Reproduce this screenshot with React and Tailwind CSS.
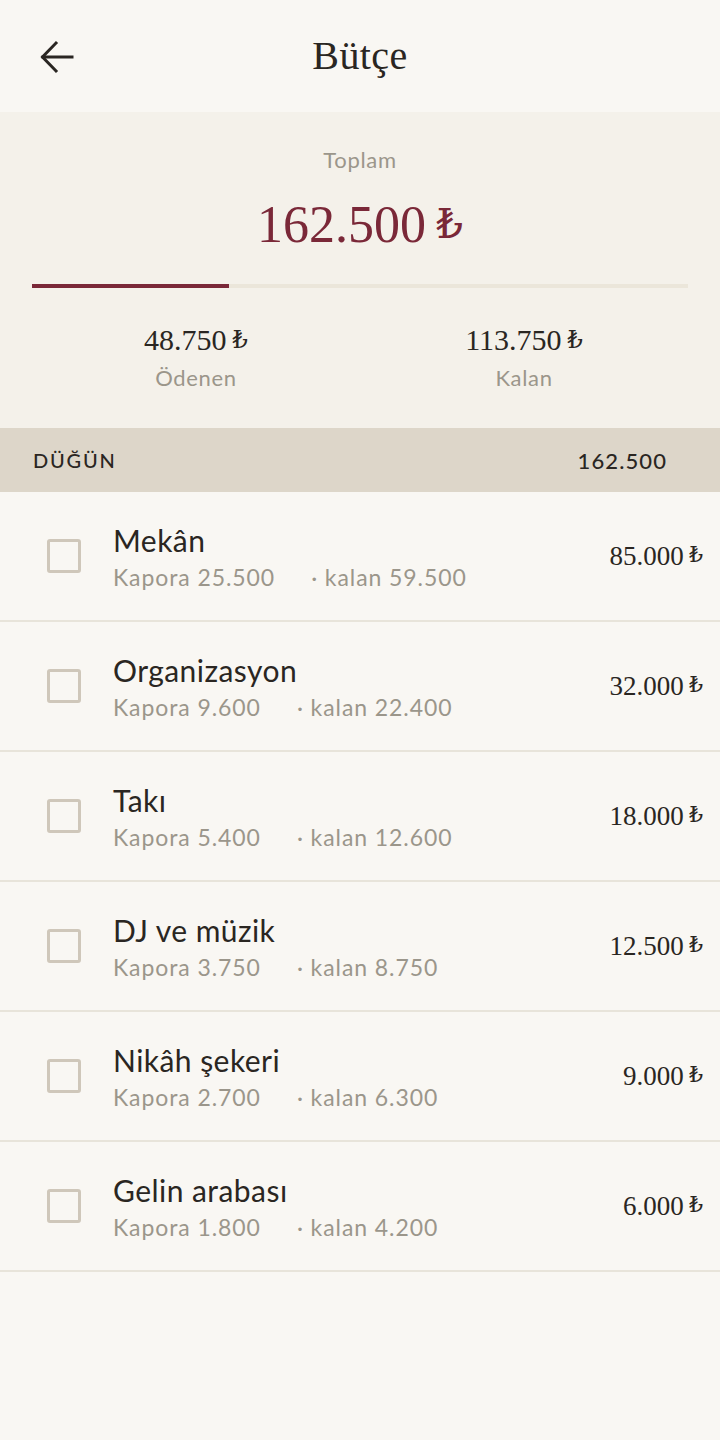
import React from "react";

const SERIF = { fontFamily: '"Liberation Serif", "DejaVu Serif", serif' };
const SANS = { fontFamily: 'Lato, "Open Sans", sans-serif' };

const items = [
  { name: "Mekân", kapora: "25.500", kalan: "59.500", amount: "85.000" },
  { name: "Organizasyon", kapora: "9.600", kalan: "22.400", amount: "32.000" },
  { name: "Takı", kapora: "5.400", kalan: "12.600", amount: "18.000" },
  { name: "DJ ve müzik", kapora: "3.750", kalan: "8.750", amount: "12.500" },
  { name: "Nikâh şekeri", kapora: "2.700", kalan: "6.300", amount: "9.000" },
  { name: "Gelin arabası", kapora: "1.800", kalan: "4.200", amount: "6.000" },
];

function Lira() {
  return <span className="ml-[0.25em] text-[0.8em] font-normal leading-none">₺</span>;
}

export default function App() {
  return (
    <div className="min-h-[1440px] w-[720px] bg-[#f9f7f3] text-[#2a2622]" style={SANS}>
      {/* Header */}
      <div className="grid h-[112px] grid-cols-[1fr_auto_1fr] items-center px-[36px]">
        <div className="flex items-center">
          <svg width="40" height="40" viewBox="0 0 40 40" fill="none" stroke="#2a2622" strokeWidth="3" className="ml-[1px] mt-[1px]">
            <path d="M6 20H35" strokeLinecap="square" />
            <path d="M19 6L5.5 20L19 34" strokeLinecap="square" strokeLinejoin="miter" />
          </svg>
        </div>
        <div className="text-[40px] leading-none tracking-[0.01em] text-[#2a2622]" style={SERIF}>
          Bütçe
        </div>
        <div />
      </div>

      {/* Summary */}
      <div className="flex h-[316px] flex-col bg-[#f4f1ea] px-[32px] pt-[36px]">
        <div className="h-[24px] text-center text-[22px] leading-[24px] tracking-[0.03em] text-[#9b968b]">Toplam</div>
        <div className="mt-[25px] flex h-[56px] items-center justify-center overflow-visible text-[52px] leading-none text-[#7a2838]" style={SERIF}>
          <span>162.500</span>
          <Lira />
        </div>
        <div className="mt-[31px] h-[4px] w-full shrink-0 bg-[#ebe6da]">
          <div className="h-full w-[30%] bg-[#7a2838]" />
        </div>
        <div className="mt-[34px] grid grid-cols-2">
          <div className="flex flex-col items-center">
            <div className="flex h-[36px] items-center text-[30px] leading-none text-[#2a2622]" style={SERIF}>
              <span>48.750</span>
              <Lira />
            </div>
            <div className="mt-[8px] h-[24px] text-[22px] leading-[24px] tracking-[0.03em] text-[#9b968b]">Ödenen</div>
          </div>
          <div className="flex flex-col items-center">
            <div className="flex h-[36px] items-center text-[30px] leading-none text-[#2a2622]" style={SERIF}>
              <span>113.750</span>
              <Lira />
            </div>
            <div className="mt-[8px] h-[24px] text-[22px] leading-[24px] tracking-[0.03em] text-[#9b968b]">Kalan</div>
          </div>
        </div>
      </div>

      {/* Section header */}
      <div className="flex h-[64px] items-center justify-between bg-[#ddd6c9] pl-[33px] pr-[53px]">
        <div className="text-[20px] font-medium tracking-[0.09em] text-[#2a2622]">DÜĞÜN</div>
        <div className="text-[22px] font-medium tracking-[0.05em] text-[#2a2622]">162.500</div>
      </div>

      {/* Rows */}
      {items.map((it) => (
        <div key={it.name} className="flex h-[130px] items-center border-b-2 border-[#e8e4da] pl-[47px] pr-[17px]">
          <div className="h-[34px] w-[34px] shrink-0 rounded-[3px] border-[3px] border-[#cfc7ba]" />
          <div className="ml-[32px] flex flex-1 flex-col">
            <div className="text-[30px] leading-[36px] tracking-[0.015em] text-[#2a2622]">{it.name}</div>
            <div className="mt-[5px] flex text-[23px] leading-[28px] tracking-[0.04em] text-[#9b968b]">
              <span>Kapora {it.kapora}</span>
              <span className="ml-[36px]">· kalan {it.kalan}</span>
            </div>
          </div>
          <div className="flex items-center text-[27px] leading-none text-[#2a2622]" style={SERIF}>
            <span>{it.amount}</span>
            <Lira />
          </div>
        </div>
      ))}
    </div>
  );
}
